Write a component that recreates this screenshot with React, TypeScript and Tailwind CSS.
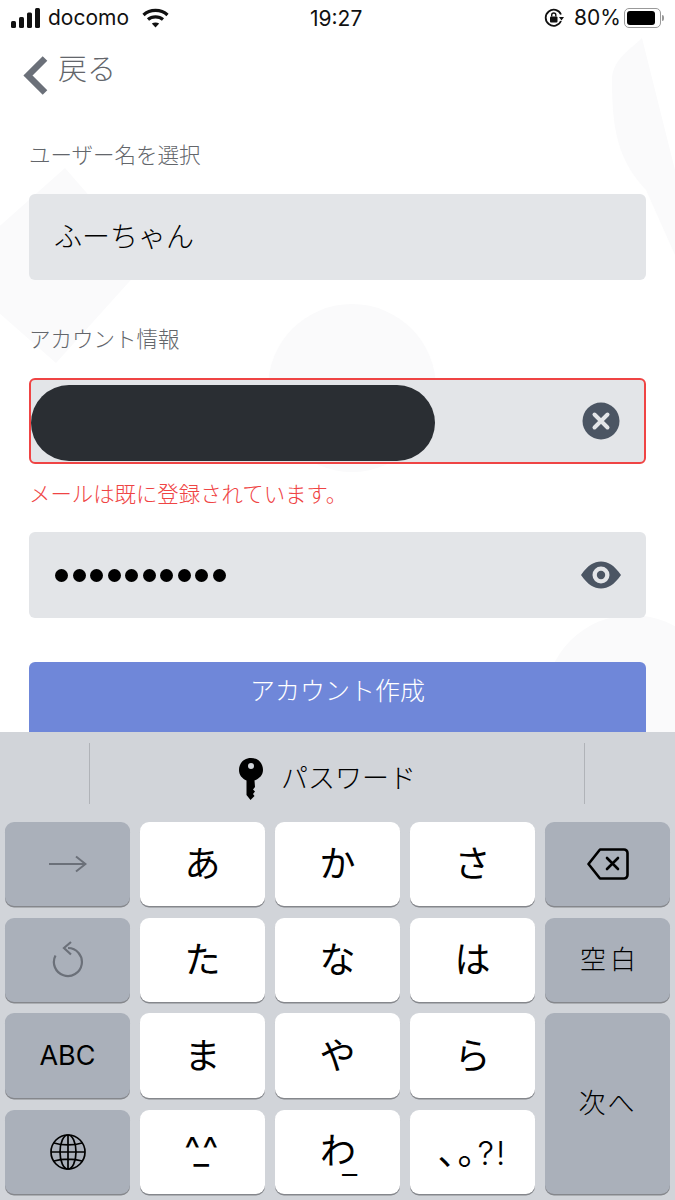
import React from 'react';

const JP = "font-['Inter','Noto_Sans_CJK_JP',sans-serif]";

const Key = ({ children, dark, className = '' }: { children: React.ReactNode; dark?: boolean; className?: string }) => (
  <div
    className={`flex items-center justify-center rounded-[9px] text-black shadow-[0_1.5px_0_#85878c] ${dark ? 'bg-[#aab0ba]' : 'bg-white'} ${className}`}
  >
    {children}
  </div>
);

const Kana = ({ t }: { t: string }) => (
  <Key>
    <span className="text-[36px] leading-none">{t}</span>
  </Key>
);

const App: React.FC = () => {
  return (
    <div className={`relative flex h-[1200px] w-[675px] flex-col overflow-hidden bg-white ${JP}`}>
      {/* faint background shapes */}
      <svg className="absolute left-0 top-0" width="675" height="740" viewBox="0 0 675 740" fill="#fafafb">
        <path d="M65 168 L147 262 L56 363 L-50 270 Z" />
        <circle cx="352" cy="388" r="84" />
        <path d="M642 38 C630 50 612 60 612 80 C612 130 618 160 646 190 L675 255 L675 170 Z" />
        <circle cx="632" cy="702" r="87" />
      </svg>

      {/* status bar */}
      <div className="relative flex h-[36px] shrink-0 items-center text-[21px] text-[#111]">
        <svg className="ml-[11px]" width="30" height="20" viewBox="0 0 30 20" fill="#111">
          <rect x="0" y="13" width="5" height="7" rx="1.5" />
          <rect x="8" y="9" width="5" height="11" rx="1.5" />
          <rect x="16" y="4.5" width="5" height="15.5" rx="1.5" />
          <rect x="24" y="0" width="5" height="20" rx="1.5" />
        </svg>
        <span className="ml-[7px] w-[84px]">docomo</span>
        <svg className="ml-[10px]" width="27" height="20" viewBox="0 0 27 20" fill="none" stroke="#111" strokeWidth="3.2">
          <path d="M1.5 7 C8 0.8 19 0.8 25.5 7" />
          <path d="M6 11.5 C10 8 17 8 21 11.5" />
          <path d="M13.5 19.5 L9.8 15.6 C12 14 15 14 17.2 15.6 Z" fill="#111" stroke="none" />
        </svg>
        <div className="absolute left-[310px] top-[3px]">19:27</div>
        <div className="ml-auto flex items-center">
          <svg width="20" height="20" viewBox="0 0 20 20" fill="none" stroke="#111" strokeWidth="1.8">
            <path d="M17 13 A8 8 0 1 1 17 6.5" />
            <path d="M15 9 L20 9 L17.5 12.5 Z" fill="#111" stroke="none" />
            <rect x="6" y="8.5" width="7.5" height="6" rx="1" fill="#111" stroke="none" />
            <path d="M7.7 8.5 V7 A2 2 0 0 1 11.8 7 V8.5" strokeWidth="1.4" />
          </svg>
          <span className="ml-[10px] w-[50px]">80%</span>
          <div className="flex items-center">
            <div className="flex h-[20px] w-[37px] items-center rounded-[5px] border border-[#999] p-[2px]">
              <div className="h-full w-[28px] rounded-[3px] bg-black" />
            </div>
            <div className="ml-[1px] h-[6px] w-[2px] rounded-r-sm bg-[#999]" />
          </div>
          <div className="w-[11px]" />
        </div>
      </div>

      {/* form */}
      <div className="relative flex min-h-0 flex-1 flex-col px-[29px]">
        <div className="mt-[10px] flex h-[59px] shrink-0 items-center -ml-[6px]">
          <svg width="25" height="39" viewBox="0 0 25 39" fill="none" stroke="#6b7079" strokeWidth="6.5">
            <path d="M22 2.5 L5 19.5 L22 36.5" />
          </svg>
          <span className="ml-[10px] -mt-[12px] text-[29px] font-light leading-none text-[#63666b]">戻る</span>
        </div>

        <label className="mt-[34px] text-[21.5px] font-light leading-[32px] text-[#63666b]">ユーザー名を選択</label>
        <div className="mt-[23px] flex h-[86px] shrink-0 items-center rounded-[6px] bg-[#e3e5e8] pl-[25px] text-[28px] font-light text-black">
          ふーちゃん
        </div>

        <label className="mt-[43px] text-[21.5px] font-light leading-[32px] text-[#63666b]">アカウント情報</label>
        <div className="mt-[23px] flex h-[86px] shrink-0 items-center rounded-[6px] border-2 border-[#ef4444] bg-[#e3e5e8] pr-[24px]">
          <div className="mt-[4px] h-[76px] w-[404px] rounded-full bg-[#2a2e33]" />
          <svg className="ml-auto" width="38" height="38" viewBox="0 0 38 38">
            <circle cx="19" cy="19" r="18.5" fill="#4b5563" />
            <path d="M12.5 12.5 L25.5 25.5 M25.5 12.5 L12.5 25.5" stroke="#e3e5e8" strokeWidth="4" strokeLinecap="round" />
          </svg>
        </div>
        <p className="mt-[14px] text-[21.4px] font-light leading-[32px] text-[#ef4444]">メールは既に登録されています。</p>

        <div className="mt-[22px] flex h-[86px] shrink-0 items-center rounded-[6px] bg-[#e3e5e8] pl-[26px] pr-[25px]">
          <div className="flex gap-[4.5px]">
            {Array.from({ length: 10 }).map((_, i) => (
              <div key={i} className="h-[13px] w-[13px] rounded-full bg-black" />
            ))}
          </div>
          <svg className="ml-auto" width="40" height="28" viewBox="0 0 40 28">
            <path fillRule="evenodd" fill="#4b5563" d="M0 14 C7 4 13 0.5 20 0.5 C27 0.5 33 4 40 14 C33 24 27 27.5 20 27.5 C13 27.5 7 24 0 14 Z M20 5.5 A8.5 8.5 0 1 0 20 22.5 A8.5 8.5 0 1 0 20 5.5 Z" />
            <circle cx="20" cy="14" r="4.2" fill="#4b5563" />
          </svg>
        </div>

        <div className="mt-[44px] flex h-[80px] shrink-0 justify-center rounded-[6px] bg-[#6f87d9] pt-[11px] text-[25px] font-light leading-[36px] text-white">
          アカウント作成
        </div>
      </div>

      {/* keyboard */}
      <div className="relative z-10 h-[468px] shrink-0 bg-[#d1d4d9]">
        <div className="flex h-[90px] items-start pl-[89px]">
          <div className="mt-[11px] flex h-[61px] w-[496px] items-center justify-center border-x border-[#b0b3b8] pr-[20px]">
            <svg className="mt-[10px]" width="26" height="42" viewBox="0 0 26 42" fill="#000">
              <path fillRule="evenodd" d="M13 0 C5.5 0 1 5.5 1 12 C1 17 4 20.5 8.5 22.5 V37 L12.5 42 L16.5 38 L15 36 L17 33.5 L15 31.5 L17 29 L16.5 22.5 C21.5 20.5 25 17 25 12 C25 5.5 20.5 0 13 0 Z M13 5 A3 3 0 1 1 13 11 A3 3 0 1 1 13 5 Z" />
            </svg>
            <span className="ml-[17px] mt-[10px] text-[27px] font-light leading-none text-black">パスワード</span>
          </div>
        </div>

        <div className="grid grid-cols-[125px_125px_125px_125px_125px] grid-rows-[84px_84px_85px_84px] gap-x-[10px] gap-y-[11.5px] px-[5px]">
          <Key dark>
            <svg width="38" height="18" viewBox="0 0 38 18" fill="none" stroke="#6b7079" strokeWidth="2">
              <path d="M0 9 H36 M27 1.5 L36.5 9 L27 16.5" />
            </svg>
          </Key>
          <Kana t="あ" />
          <Kana t="か" />
          <Kana t="さ" />
          <Key dark>
            <svg width="42" height="32" viewBox="0 0 42 32" fill="none" stroke="#000" strokeWidth="2.6" strokeLinejoin="round">
              <path d="M13 1.5 H37 A3.5 3.5 0 0 1 40.5 5 V27 A3.5 3.5 0 0 1 37 30.5 H13 L1.5 16 Z" />
              <path d="M20 10 L31 21 M31 10 L20 21" strokeLinecap="round" />
            </svg>
          </Key>

          <Key dark>
            <svg width="32" height="37" viewBox="0 0 32 37" fill="none" stroke="#6b7079" strokeWidth="2.2">
              <path d="M16 7 A14 14 0 1 1 3.5 14.5" />
              <path d="M19 1 L12 7 L19 13.5" />
            </svg>
          </Key>
          <Kana t="た" />
          <Kana t="な" />
          <Kana t="は" />
          <Key dark>
            <span className="ml-[5px] text-[26px] font-light leading-none tracking-[4px]">空白</span>
          </Key>

          <Key dark>
            <span className="text-[27px] leading-none">ABC</span>
          </Key>
          <Kana t="ま" />
          <Kana t="や" />
          <Kana t="ら" />
          <Key dark className="row-span-2">
            <span className="text-[27px] font-light leading-none tracking-[2px]">次へ</span>
          </Key>

          <Key dark>
            <svg width="36" height="36" viewBox="0 0 36 36" fill="none" stroke="#000" strokeWidth="1.7">
              <circle cx="18" cy="18" r="17" />
              <ellipse cx="18" cy="18" rx="8" ry="17" />
              <path d="M18 1 V35 M1 18 H35 M4 9 C12 11.5 24 11.5 32 9 M4 27 C12 24.5 24 24.5 32 27" />
            </svg>
          </Key>
          <Key>
            <span className="-mt-[6px] -ml-[7px] text-[34px] leading-none tracking-[-4.5px]">
              ^<span className="relative top-[3px]">_</span>^
            </span>
          </Key>
          <Key>
            <span className="-mt-[2px] ml-[2px] text-[36px] leading-none">
              わ<span className="relative top-[10px] -ml-[14px] text-[34px] font-light">_</span>
            </span>
          </Key>
          <Key>
            <span className="text-[36px] leading-none [text-spacing-trim:space-all]">
              <span className="tracking-[-16px]">、。</span>
              <span className="text-[33px] font-light tracking-[2px]">?!</span>
            </span>
          </Key>
        </div>
      </div>
    </div>
  );
};

export default App;
